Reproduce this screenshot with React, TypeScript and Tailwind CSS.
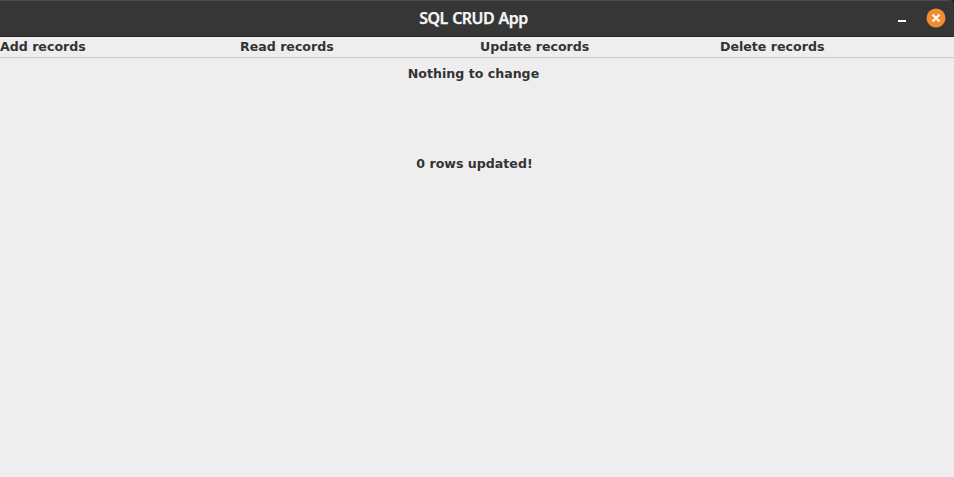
const menus = ["Add records", "Read records", "Update records", "Delete records"];

export default function App() {
  return (
    <div className="flex h-[477px] w-[954px] flex-col overflow-hidden bg-[#eeeeee] font-['DejaVu_Sans',sans-serif] text-[12.6px] font-bold text-[#333333]">
      <div className="shrink-0 bg-[#202020]">
        <header className="grid h-[37px] grid-cols-[1fr_auto_1fr] items-center rounded-tr-[5px] border-t border-b border-t-[#4a4a4a] border-b-[#242424] bg-[#363636]">
          <span />
          <h1 className="mr-[7px] mb-[2px] font-['Noto_Sans',sans-serif] text-[16px] leading-[20px] font-semibold tracking-[-0.55px] text-[#f6f6f6] [-webkit-text-stroke:0.25px_#f6f6f6] [word-spacing:0.8px]">SQL CRUD App</h1>
          <div className="flex items-center justify-end gap-[20px] pr-[8px]">
            <button aria-label="Minimize" className="mt-[5px] h-[2px] w-[8px] bg-white" />
            <button aria-label="Close" className="mb-px size-[20px]">
              <svg viewBox="0 0 20 20" className="size-[20px]">
                <circle cx="10" cy="10" r="9.5" fill="#f18d2e" />
                <path d="M6.5 6.5 13.5 13.5M13.5 6.5 6.5 13.5" stroke="#fff8f0" strokeWidth="2.3" />
              </svg>
            </button>
          </div>
        </header>
      </div>
      <nav className="flex h-[21px] shrink-0 border-b border-[#cccccc]">
        {menus.map((m) => (
          <button key={m} className="flex w-[240px] shrink-0 items-start text-left leading-[20px]">{m}</button>
        ))}
      </nav>
      <main className="flex flex-col items-center pt-[8px] pr-[7px]">
        <p className="leading-[16px]">Nothing to change</p>
        <p className="mt-[74px] ml-[2px] leading-[16px]">0 rows updated!</p>
      </main>
    </div>
  );
}
